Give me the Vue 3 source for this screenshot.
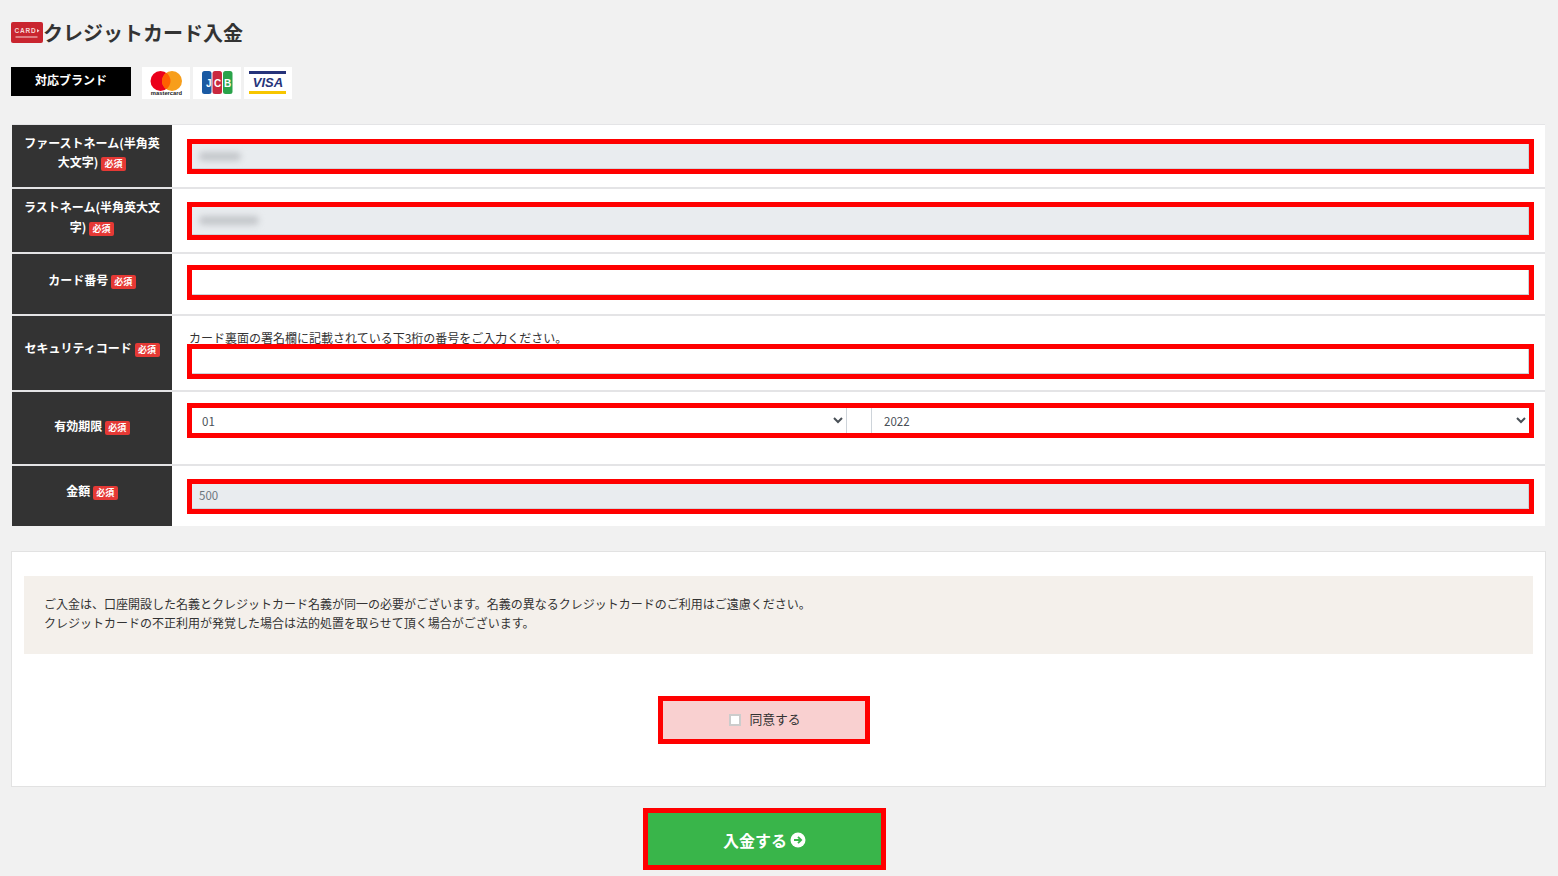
<script setup>
const rows = [
  { cls: 'r1', label: 'ファーストネーム(半角英大文字)', kind: 'blur', wide: false },
  { cls: 'r2', label: 'ラストネーム(半角英大文字)', kind: 'blur', wide: true },
  { cls: 'r3', label: 'カード番号', kind: 'empty' },
  { cls: 'r4', label: 'セキュリティコード', kind: 'note' },
  { cls: 'r5', label: '有効期限', kind: 'select' },
  { cls: 'r6', label: '金額', kind: 'amount' }
]
const months = ['01','02','03','04','05','06','07','08','09','10','11','12']
const years = ['2022','2023','2024','2025','2026','2027']
</script>

<template>
  <div class="page">
    <h1 class="title">
      <svg class="card-icon" width="32" height="21" viewBox="0 0 32 21">
        <rect width="32" height="21" rx="2" fill="#c9252f"/>
        <text x="3.500" y="11" class="card-text">CARD</text>
        <path d="M26 7l2.500 1.800-2.500 1.800z" fill="#f6d5d5"/>
        <rect x="4.500" y="14.500" width="22" height="1" fill="#f6d5d5"/>
      </svg>
      <span>クレジットカード入金</span>
    </h1>

    <div class="brands">
      <div class="brand-label">対応ブランド</div>
      <div class="logos">
        <svg class="logo" width="48" height="32" viewBox="0 0 48 32">
          <rect width="48" height="32" fill="#fff"/>
          <circle cx="18.500" cy="14" r="10" fill="#eb001b"/>
          <circle cx="30" cy="14" r="10" fill="#f79e1b"/>
          <path d="M24.250 5.800a10 10 0 0 1 0 16.400a10 10 0 0 1 0-16.400z" fill="#ff5f00"/>
          <text x="24.500" y="28" text-anchor="middle" class="mc-text">mastercard</text>
        </svg>
        <svg class="logo" width="48" height="32" viewBox="0 0 48 32">
          <rect width="48" height="32" fill="#fff"/>
          <rect x="9" y="4" width="9.500" height="23" rx="2.500" fill="#1a5aa3"/>
          <rect x="19.500" y="4" width="9.500" height="23" rx="2.500" fill="#c9283e"/>
          <rect x="30" y="4" width="9.500" height="23" rx="2.500" fill="#2aa34a"/>
          <text x="13" y="19.500" class="jcb-text">J</text>
          <text x="21" y="19.500" class="jcb-text">C</text>
          <text x="31" y="19.500" class="jcb-text">B</text>
        </svg>
        <svg class="logo" width="48" height="32" viewBox="0 0 48 32">
          <rect width="48" height="32" fill="#fff"/>
          <rect x="5" y="4" width="37" height="3" fill="#26337a"/>
          <rect x="5" y="24" width="37" height="3" fill="#f7c600"/>
          <text x="24" y="20" text-anchor="middle" class="visa-text">VISA</text>
        </svg>
      </div>
    </div>

    <div class="form-table">
      <div v-for="row in rows" :key="row.cls" class="row" :class="row.cls">
        <div class="th">
          <div class="th-text">{{ row.label }} <span class="badge">必須</span></div>
        </div>
        <div class="td">
          <p v-if="row.kind === 'note'" class="note">カード裏面の署名欄に記載されている下3桁の番号をご入力ください。</p>
          <div class="red-box">
            <div v-if="row.kind === 'blur'" class="field disabled">
              <span class="blur-text" :class="{ wide: row.wide }"></span>
            </div>
            <div v-else-if="row.kind === 'amount'" class="field disabled">500</div>
            <div v-else-if="row.kind === 'select'" class="selects">
              <select class="sel"><option v-for="m in months" :key="m">{{ m }}</option></select>
              <select class="sel"><option v-for="y in years" :key="y">{{ y }}</option></select>
            </div>
            <div v-else class="field"></div>
          </div>
        </div>
      </div>
    </div>

    <section class="panel">
      <div class="notice">
        <p>ご入金は、口座開設した名義とクレジットカード名義が同一の必要がございます。名義の異なるクレジットカードのご利用はご遠慮ください。</p>
        <p>クレジットカードの不正利用が発覚した場合は法的処置を取らせて頂く場合がございます。</p>
      </div>
      <label class="agree">
        <span class="check"></span>
        <span class="agree-text">同意する</span>
      </label>
    </section>

    <div class="submit-wrap">
      <button class="submit" type="button">
        <span class="submit-text">入金する</span>
        <svg width="16" height="16" viewBox="0 0 16 16">
          <circle cx="8" cy="8" r="7.500" fill="#fff"/>
          <path d="M4 8h7M8 4.800L11.200 8 8 11.200" fill="none" stroke="#39b54a" stroke-width="1.800"/>
        </svg>
      </button>
    </div>
  </div>
</template>

<style>
html, body { margin: 0; background: #f1f1f1; overflow: hidden; }
</style>

<style scoped>
.page {
  width: 1558px;
  height: 876px;
  box-sizing: border-box;
  padding: 20px 12px 0 11px;
  background: #f1f1f1;
  font-family: "Noto Sans CJK JP", "Noto Sans", sans-serif;
  color: #333;
  font-size: 12px;
}
p { margin: 0; }

.title {
  margin: 0 0 22px;
  height: 25px;
  display: flex;
  align-items: center;
  font-size: 20px;
  line-height: 25px;
  font-weight: 700;
  color: #333;
}
.card-icon { flex: none; }
.card-text { font: 700 6.500px "Liberation Sans", sans-serif; fill: #f6d5d5; letter-spacing: 0.800px; }

.brands { display: flex; gap: 11px; height: 32px; }
.brand-label {
  width: 120px;
  height: 29px;
  background: #000;
  color: #fff;
  font-weight: 700;
  font-size: 12px;
  line-height: 25px;
  text-align: center;
}
.logos { display: flex; gap: 3px; }
.logo { display: block; }
.mc-text { font: 700 5.800px "Liberation Sans", sans-serif; fill: #222; }
.jcb-text { font: 700 10px "Liberation Sans", sans-serif; fill: #fff; }
.visa-text { font: italic 700 13px "Liberation Sans", sans-serif; fill: #26337a; }

.form-table {
  margin: 25px 1px 0 1px;
  background: #e4e4e6;
  padding-top: 1px;
}
.row { display: flex; margin-bottom: 2px; }
.row:last-child { margin-bottom: 0; }
.r1 { height: 62px; }
.r2 { height: 63px; }
.r3 { height: 60px; }
.r4 { height: 74px; }
.r5 { height: 72px; }
.r6 { height: 60px; }

.th {
  flex: none;
  width: 160px;
  box-sizing: border-box;
  padding: 0 12px 8px;
  background: #333;
  color: #fff;
  font-weight: 700;
  line-height: 20px;
  text-align: center;
  display: flex;
  align-items: center;
  justify-content: center;
}
.r1 .th { line-height: 19px; }
.r4 .th, .r6 .th { padding-bottom: 10px; }
.r5 .th { padding-bottom: 4px; }
.th-text { width: 100%; }
.badge {
  display: inline-block;
  width: 25px;
  height: 14px;
  background: #e53935;
  color: #fff;
  border-radius: 2px;
  font-size: 9px;
  line-height: 14px;
  text-align: center;
  vertical-align: 0;
}

.td {
  flex: 1;
  background: #fff;
  box-sizing: border-box;
  padding: 14px 11px 0 15px;
}
.r2 .td { padding-top: 13px; }
.r3 .td { padding-top: 11px; }
.r4 .td { padding-top: 15px; }
.r5 .td { padding-top: 11px; }
.r6 .td { padding-top: 13px; }

.note {
  height: 13px;
  padding-left: 2px;
  line-height: 14px;
  font-size: 12px;
  color: #333;
  white-space: nowrap;
}

.red-box {
  position: relative;
  height: 35px;
  box-sizing: border-box;
  border: 5px solid #f00;
  background: #fff;
}
.r2 .red-box { height: 38px; }

.field {
  height: 100%;
  box-sizing: border-box;
  border: 1px solid #ced4da;
  border-width: 0 1px 1px 0;
  padding: 0 7px 3px;
  display: flex;
  align-items: center;
  font-size: 11.500px;
  color: #6c757d;
}
.field.disabled { background: #e9ecef; }
.blur-text {
  display: block;
  width: 42px;
  height: 9px;
  margin-top: 3px;
  background: #c3c6ca;
  border-radius: 5px;
  filter: blur(3px);
}
.blur-text.wide { width: 60px; }

.selects { display: flex; gap: 24px; height: 100%; }
.sel {
  flex: 1;
  min-width: 0;
  height: 100%;
  box-sizing: border-box;
  border: 0;
  border-right: 1px solid #ced4da;
  border-left: 1px solid #ced4da;
  border-radius: 0;
  background-color: #fff;
  padding: 0 9px 0 8px;
  font-family: inherit;
  font-size: 11.500px;
  color: #495057;
  outline: none;
}
.sel:first-child { flex: none; width: 655px; border-left: 0; padding-left: 6px; }
.sel:last-child { border-right: 0; padding-right: 10px; }

.panel {
  margin-top: 25px;
  height: 236px;
  box-sizing: border-box;
  border: 1px solid #e2e2e2;
  background: #fff;
  padding: 24px 12px 0;
  display: flex;
  flex-direction: column;
  align-items: center;
}
.notice {
  align-self: stretch;
  height: 78px;
  box-sizing: border-box;
  background: #f4f0eb;
  padding: 18px 20px 0;
  line-height: 19px;
  font-size: 12px;
  color: #333;
}
.agree {
  margin: 42px 30px 0 0;
  width: 212px;
  height: 48px;
  box-sizing: border-box;
  border: 5px solid #f00;
  background: #f9d0d0;
  display: flex;
  align-items: center;
  justify-content: center;
  gap: 8px;
  font-size: 12.800px;
  color: #333;
  padding-left: 3px;
}
.agree-text { margin-top: -4px; }
.check {
  width: 12px;
  height: 12px;
  box-sizing: border-box;
  border: 2px solid #ccc;
  background: #fff;
}

.submit-wrap { display: flex; justify-content: center; margin-top: 21px; padding-right: 28px; }
.submit {
  width: 243px;
  height: 62px;
  box-sizing: border-box;
  border: 5px solid #f00;
  background: #39b54a;
  color: #fff;
  font-family: inherit;
  font-size: 16px;
  font-weight: 700;
  display: flex;
  align-items: center;
  justify-content: center;
  gap: 3px;
  padding: 2px 0 0;
}
</style>
